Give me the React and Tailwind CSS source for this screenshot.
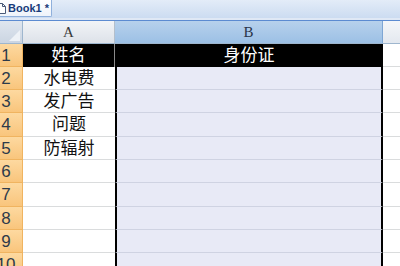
const rows = [
  { n: "1", a: "姓名", b: "身份证", h: "h-[23px]", head: true },
  { n: "2", a: "水电费", h: "h-[23px]" },
  { n: "3", a: "发广告", h: "h-[23px]" },
  { n: "4", a: "问题", h: "h-[24px]" },
  { n: "5", a: "防辐射", h: "h-[23px]" },
  { n: "6", a: "", h: "h-[23px]" },
  { n: "7", a: "", h: "h-[24px]" },
  { n: "8", a: "", h: "h-[23px]" },
  { n: "9", a: "", h: "h-[23px]" },
  { n: "10", a: "", h: "h-[23px]" },
]

function DocIcon() {
  return (
    <svg width="6" height="11" viewBox="0 0 6 11" className="shrink-0">
      <path d="M-3 0.5 H2.5 L5.5 3.5 V10.5 H-3 Z" fill="#fff" stroke="#4a5a78" strokeWidth="1" />
      <path d="M2.5 0.5 V3.5 H5.5" fill="none" stroke="#4a5a78" strokeWidth="1" />
    </svg>
  )
}

export default function App() {
  return (
    <div
      className="w-[400px] h-[266px] overflow-hidden bg-white"
      style={{ fontFamily: '"Liberation Sans", "Noto Sans CJK SC", sans-serif' }}
    >
      {/* workbook tab strip */}
      <div className="h-[21px] flex flex-col bg-gradient-to-b from-[#e3ecf8] to-[#c9daf0] border-b border-[#5c8bd1]">
        <div className="flex h-[18px]">
          <div className="w-[52px] h-[17px] flex items-center gap-[2px] bg-gradient-to-b from-white to-[#eef3fa] border-r border-b border-[#8fb0dc] rounded-br-[2px]">
            <DocIcon />
            <span className="whitespace-nowrap text-[11px] font-bold text-[#183c7a] leading-none">Book1 *</span>
          </div>
          <div className="flex-1" />
        </div>
        <div className="flex-1 bg-[#dfe8f5]" />
      </div>

      {/* column headers */}
      <div className="flex h-[23px] border-b border-[#9eb6ce]">
        <div className="relative w-[23px] bg-gradient-to-b from-[#dfe6ef] to-[#cbd5e2] border-r border-[#9eb6ce]">
          <div className="absolute right-[2px] bottom-[2px] w-0 h-0 border-l-[11px] border-l-transparent border-b-[11px] border-b-[#eef2f7]" />
        </div>
        <div
          className="w-[92px] flex items-center justify-center bg-gradient-to-b from-[#f2f4f7] to-[#dde2e9] border-r border-[#b3bfcc] text-[15px] text-[#3a3a3a]"
          style={{ fontFamily: '"Liberation Serif", serif' }}
        >
          A
        </div>
        <div
          className="w-[268px] flex items-center justify-center bg-gradient-to-b from-[#b7d1ec] to-[#9cc0e5] border-r border-[#7ea6d4] text-[15px] text-[#2a3448]"
          style={{ fontFamily: '"Liberation Serif", serif' }}
        >
          B
        </div>
        <div className="flex-1 bg-gradient-to-b from-[#f4f6f9] to-[#e3e8ef]" />
      </div>

      {/* rows */}
      {rows.map((r) => (
        <div key={r.n} className={`flex ${r.h}`}>
          <div className="w-[23px] flex items-center overflow-hidden bg-gradient-to-b from-[#fdd9a0] to-[#f9c57c] border-r border-b border-[#f0b460]">
            <div className="shrink-0 w-[30px] -ml-[9px] text-center whitespace-nowrap text-[17px] leading-none text-[#2d3a4a]">
              {r.n}
            </div>
          </div>
          {r.head ? (
            <>
              <div className="w-[92px] flex items-center justify-center bg-black border-r border-[#8a8a8a] text-white text-[17px] leading-none">
                {r.a}
              </div>
              <div className="w-[268px] flex items-center justify-center bg-black text-white text-[17px] leading-none">
                {r.b}
              </div>
              <div className="flex-1 border-b border-[#dadcdd]" />
            </>
          ) : (
            <>
              <div className="w-[92px] flex items-center justify-center bg-white border-b border-[#dadcdd] text-[17px] leading-none text-[#111]">
                {r.a}
              </div>
              <div className="w-[268px] bg-[#e8eaf6] border-l-2 border-r-2 border-l-black border-r-black border-b border-b-[#cfd3e2]" />
              <div className="flex-1 border-b border-[#dadcdd]" />
            </>
          )}
        </div>
      ))}
    </div>
  )
}
